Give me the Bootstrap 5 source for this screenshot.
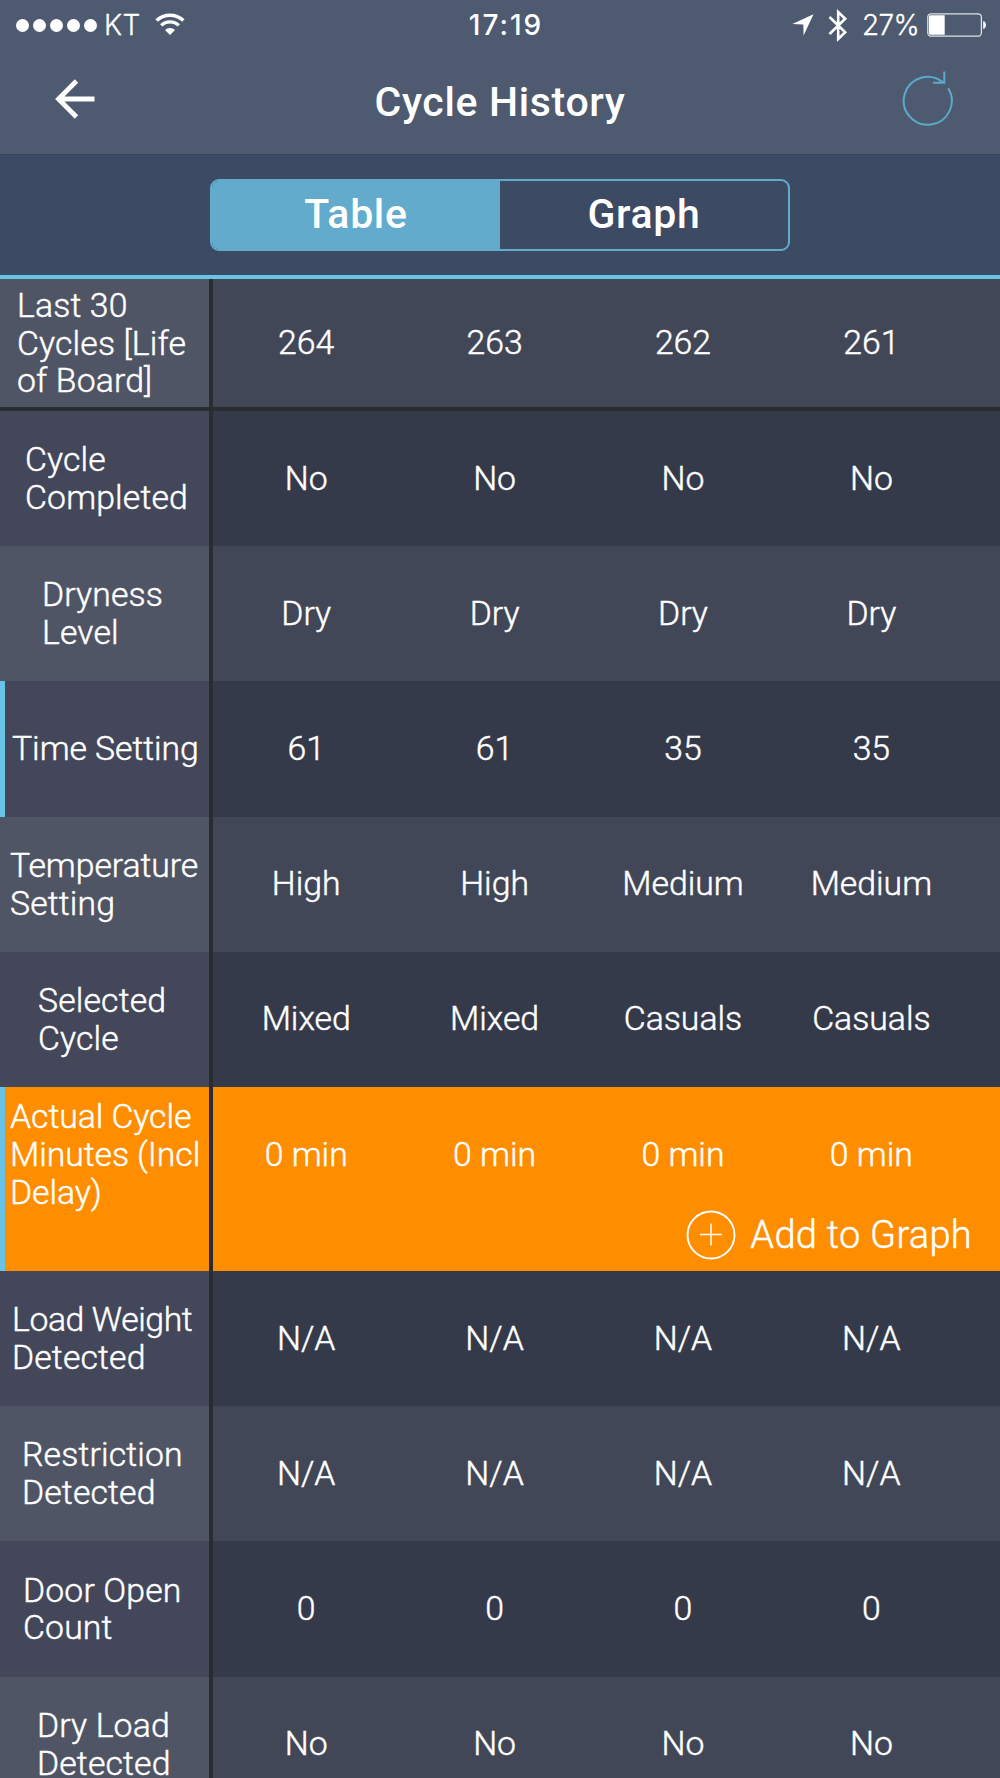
<!DOCTYPE html>
<html lang="en">
<head>
<meta charset="utf-8">
<meta name="viewport" content="width=device-width, initial-scale=1">
<title>Cycle History</title>
<link href="https://cdn.jsdelivr.net/npm/bootstrap@5.3.0/dist/css/bootstrap.min.css" rel="stylesheet">
<style>
  body { font-family: Roboto, "Liberation Sans", sans-serif; background: #353a4b; color: #fff; }
  .phone-screen { width: 1000px; height: 1778px; }
  .top-bar { height: 155px; background: #4e5a70; border-bottom: 1px solid #35455a; }
  .status-bar { height: 50px; font: 300 28px/51px Inter, sans-serif; -webkit-text-stroke: .3px #fff; }
  .status-side { width: 400px; }
  .status-left { padding-left: 16px; }
  .status-right { padding-right: 13px; }
  .signal-dots { gap: 4px; }
  .signal-dots i { width: 13px; height: 13px; border-radius: 50%; background: #fff; }
  .carrier { margin-left: 7px; letter-spacing: .3px; }
  .wifi-icon { margin: 0 0 3px 14px; }
  .clock { font-weight: 500; letter-spacing: 2px; padding-left: 12px; -webkit-text-stroke: 0; }
  .bluetooth-icon { margin-left: 14px; }
  .battery-text { margin-left: 14px; letter-spacing: -.7px; }
  .battery-icon { margin-left: 8px; }
  .nav-title { font-size: 41px; line-height: 48px; font-weight: 500; letter-spacing: .65px; }
  .nav-row { height: 104px; }
  .back-icon { margin-bottom: 6px; }
  .refresh-icon { margin-bottom: 7px; }
  .tab-band { height: 120px; padding-top: 24px; background: #3d4a63; }
  .seg-control { width: 580px; height: 72px; border-radius: 9px; border: 2px solid #62abcd; }
  .seg-item { font-size: 41px; font-weight: 500; line-height: 67px; color: #fff; letter-spacing: .7px; }
  .seg-item.active { background: #62abcd; }
  .grid-rows { border-top: 4px solid #68c3e7; }
  .grid-line { height: 135.2px; font-size: 33.75px; font-weight: 300; line-height: 37.8px; background: #353a4b; flex: none; -webkit-text-stroke: .45px #fff; }
  .grid-line:nth-child(odd) { background: #424757; }
  .grid-line .label-cell { width: 213px; background: #434759; border-right: 4px solid #2a2d30; }
  .grid-line:nth-child(odd) .label-cell { background: #505565; }
  .grid-line.head-line { height: 132px; border-bottom: 4px solid #2a2d30; }
  .values { margin-left: -1px; }
  .value-cell { width: 188.4px; text-align: center; }
  .marked .label-cell { border-left: 5px solid #68c3e7; }
  .grid-line.selected-line, .grid-line.selected-line .label-cell { background: #ff8d00; }
  .grid-line.selected-line { height: 184px; }
  .selected-line .label-cell { padding-top: 11px; }
  .value-row { height: 135px; }
  .add-link { height: 48px; gap: 14px; padding-right: 28px; font-size: 38px; line-height: 48px; margin-top: -11px; letter-spacing: .3px; }
  .label-text { white-space: nowrap; padding-top: 1px; letter-spacing: .15px; }
  .tight { letter-spacing: -.4px; }
  .snug { letter-spacing: -.05px; }
</style>
<script src="https://cdn.jsdelivr.net/npm/bootstrap@5.3.0/dist/js/bootstrap.bundle.min.js"></script>
</head>
<body>
<div class="phone-screen d-flex flex-column overflow-hidden">
  <header class="top-bar flex-shrink-0">
    <div class="status-bar d-flex justify-content-between">
      <div class="status-side status-left d-flex align-items-center">
        <span class="signal-dots d-flex"><i></i><i></i><i></i><i></i><i></i></span>
        <span class="carrier">KT</span>
        <svg class="wifi-icon" width="30" height="22" viewBox="0 0 30 22" fill="none" stroke="#fff"><path d="M1.600 7.600a19.200 19.200 0 0 1 26.800 0" stroke-width="3.500"/><path d="M6.200 12.400a12.600 12.600 0 0 1 17.600 0" stroke-width="3.300"/><path d="M15 22l-5-5a7.200 7.200 0 0 1 10 0z" fill="#fff" stroke="none"/></svg>
      </div>
      <span class="clock">17:19</span>
      <div class="status-side status-right d-flex align-items-center justify-content-end">
        <svg width="22" height="22" viewBox="0 0 22 22" fill="#fff"><path d="M21.500 .3L11.600 21.500 11.300 10.500.3 10z"/></svg>
        <svg class="bluetooth-icon" width="20" height="33" viewBox="0 0 20 33" fill="none" stroke="#fff" stroke-width="2.600"><path d="M1.500 8l15.700 15.300-7 6.700V3l7 6.700L1.500 25"/></svg>
        <span class="battery-text">27%</span>
        <svg class="battery-icon" width="60" height="24" viewBox="0 0 60 24"><rect x=".8" y=".8" width="53.600" height="22.400" rx="3.500" fill="none" stroke="#dfe2e7" stroke-width="1.300"/><path d="M3.500 2.200h14.200v19.600H3.500a1.500 1.500 0 0 1-1.500-1.500V3.700a1.500 1.500 0 0 1 1.500-1.500z" fill="#fff"/><path d="M56.200 8c3.700 1 3.700 7 0 8z" fill="#fff"/></svg>
      </div>
    </div>
    <nav class="nav-row d-flex align-items-center justify-content-between">
      <svg class="back-icon" width="100" height="40" viewBox="0 0 100 40" fill="none" stroke="#fff" stroke-width="4.800"><path d="M94.500 20H59M76.500 2L58.500 20l18 18"/></svg>
      <h1 class="nav-title m-0">Cycle History</h1>
      <svg class="refresh-icon" width="100" height="56" viewBox="1 0 100 56" fill="none" stroke="#5aa9c9" stroke-width="2"><path d="M49.200 17.200A24 24 0 1 1 44.300 11.500M45.300 .5v11.300H34"/></svg>
    </nav>
  </header>

  <div class="tab-band d-flex justify-content-center flex-shrink-0">
    <div class="seg-control d-flex overflow-hidden text-center">
      <a class="seg-item active w-50 text-decoration-none">Table</a>
      <a class="seg-item w-50 text-decoration-none">Graph</a>
    </div>
  </div>

  <main class="grid-rows d-flex flex-column flex-shrink-0">
    <section class="grid-line head-line d-flex">
      <div class="label-cell d-flex align-items-center" style="padding-left:17px"><span class="label-text">Last 30<br>Cycles [Life<br>of Board]</span></div>
      <div class="values d-flex align-items-center"><span class="value-cell">264</span><span class="value-cell">263</span><span class="value-cell">262</span><span class="value-cell">261</span></div>
    </section>
    <section class="grid-line d-flex">
      <div class="label-cell d-flex align-items-center" style="padding-left:25px"><span class="label-text">Cycle<br>Completed</span></div>
      <div class="values d-flex align-items-center"><span class="value-cell">No</span><span class="value-cell">No</span><span class="value-cell">No</span><span class="value-cell">No</span></div>
    </section>
    <section class="grid-line d-flex">
      <div class="label-cell d-flex align-items-center" style="padding-left:42px"><span class="label-text">Dryness<br>Level</span></div>
      <div class="values d-flex align-items-center"><span class="value-cell">Dry</span><span class="value-cell">Dry</span><span class="value-cell">Dry</span><span class="value-cell">Dry</span></div>
    </section>
    <section class="grid-line marked d-flex">
      <div class="label-cell d-flex align-items-center" style="padding-left:7px"><span class="label-text snug pt-0">Time Setting</span></div>
      <div class="values d-flex align-items-center"><span class="value-cell">61</span><span class="value-cell">61</span><span class="value-cell">35</span><span class="value-cell">35</span></div>
    </section>
    <section class="grid-line d-flex">
      <div class="label-cell d-flex align-items-center" style="padding-left:10px"><span class="label-text"><span class="snug">Temperature</span><br>Setting</span></div>
      <div class="values d-flex align-items-center"><span class="value-cell">High</span><span class="value-cell">High</span><span class="value-cell">Medium</span><span class="value-cell">Medium</span></div>
    </section>
    <section class="grid-line d-flex">
      <div class="label-cell d-flex align-items-center" style="padding-left:38px"><span class="label-text">Selected<br>Cycle</span></div>
      <div class="values d-flex align-items-center"><span class="value-cell">Mixed</span><span class="value-cell">Mixed</span><span class="value-cell">Casuals</span><span class="value-cell">Casuals</span></div>
    </section>
    <section class="grid-line selected-line marked d-flex">
      <div class="label-cell" style="padding-left:5px"><span class="label-text snug">Actual Cycle<br>Minutes (Incl<br>Delay)</span></div>
      <div class="flex-grow-1">
        <div class="values value-row d-flex align-items-center"><span class="value-cell">0 min</span><span class="value-cell">0 min</span><span class="value-cell">0 min</span><span class="value-cell">0 min</span></div>
        <div class="add-link d-flex align-items-center justify-content-end">
          <svg width="50" height="50" viewBox="0 0 50 50" fill="none" stroke="#fff"><circle cx="25" cy="25" r="23.500" stroke-width="1.900"/><path d="M14 24.500h22M25 13.500v22" stroke-width="1.500"/></svg>
          <span>Add to Graph</span>
        </div>
      </div>
    </section>
    <section class="grid-line d-flex">
      <div class="label-cell d-flex align-items-center" style="padding-left:12px"><span class="label-text"><span class="tight">Load Weight</span><br>Detected</span></div>
      <div class="values d-flex align-items-center"><span class="value-cell">N/A</span><span class="value-cell">N/A</span><span class="value-cell">N/A</span><span class="value-cell">N/A</span></div>
    </section>
    <section class="grid-line d-flex">
      <div class="label-cell d-flex align-items-center" style="padding-left:22px"><span class="label-text">Restriction<br>Detected</span></div>
      <div class="values d-flex align-items-center"><span class="value-cell">N/A</span><span class="value-cell">N/A</span><span class="value-cell">N/A</span><span class="value-cell">N/A</span></div>
    </section>
    <section class="grid-line d-flex">
      <div class="label-cell d-flex align-items-center" style="padding-left:23px"><span class="label-text">Door Open<br>Count</span></div>
      <div class="values d-flex align-items-center"><span class="value-cell">0</span><span class="value-cell">0</span><span class="value-cell">0</span><span class="value-cell">0</span></div>
    </section>
    <section class="grid-line d-flex">
      <div class="label-cell d-flex align-items-center" style="padding-left:37px"><span class="label-text">Dry Load<br>Detected</span></div>
      <div class="values d-flex align-items-center"><span class="value-cell">No</span><span class="value-cell">No</span><span class="value-cell">No</span><span class="value-cell">No</span></div>
    </section>
  </main>
</div>
</body>
</html>
